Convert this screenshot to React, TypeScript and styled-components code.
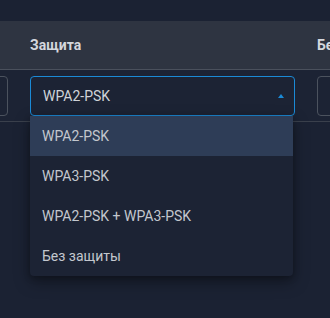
import React from "react";
import styled, { createGlobalStyle } from "styled-components";

const Global = createGlobalStyle`
  html, body { margin: 0; padding: 0; background: #1b2233; }
  body { font-family: Roboto, "Noto Sans", sans-serif; overflow: hidden; }
`;

const Page = styled.div`
  width: 330px;
  height: 318px;
  background: #1b2233;
  padding-top: 21px;
  box-sizing: border-box;
  overflow: hidden;
`;

const Table = styled.div`
  margin-left: -268px;
  display: flex;
  flex-direction: column;
  width: max-content;
`;

const HeaderRow = styled.div`
  display: flex;
  background: #2e3441;
  border-bottom: 1px solid #4a505c;
  height: 48px;
`;

const HeaderCell = styled.div`
  width: 287px;
  box-sizing: border-box;
  padding: 0 11px;
  display: flex;
  align-items: center;
  font-size: 14px;
  font-weight: 700;
  color: #d4d7dd;
  white-space: nowrap;
`;

const BodyRow = styled.div`
  display: flex;
  background: #1c2334;
  border-bottom: 1px solid #3a404c;
  height: 52px;
  box-sizing: border-box;
  padding: 6px 0;
`;

const Cell = styled.div`
  width: 287px;
  box-sizing: border-box;
  padding: 0 11px;
  position: relative;
`;

const SelectBox = styled.div<{ $open?: boolean }>`
  height: 40px;
  box-sizing: border-box;
  border: 1px solid ${(p) => (p.$open ? "#1b8ad6" : "#4b525e")};
  border-radius: 4px;
  display: flex;
  align-items: center;
  justify-content: space-between;
  padding: 0 9px 0 12px;
  font-size: 14px;
  color: #d0d3d9;
  background: #1c2334;
`;

const Arrow = styled.span`
  width: 0;
  height: 0;
  border-left: 3px solid transparent;
  border-right: 3px solid transparent;
  border-bottom: 4px solid #1b8ad6;
  margin-right: 1px;
`;

const Menu = styled.div`
  position: absolute;
  left: 11px;
  top: 40px;
  width: 263px;
  background: #1c2334;
  border-radius: 0 0 4px 4px;
  box-shadow: 0 6px 16px rgba(0, 0, 0, 0.35), 0 2px 6px rgba(0, 0, 0, 0.25);
  z-index: 10;
  overflow: hidden;
`;

const Option = styled.div<{ $active?: boolean }>`
  height: 40px;
  display: flex;
  align-items: center;
  padding: 0 12px;
  font-size: 14px;
  color: #c3c7ce;
  background: ${(p) => (p.$active ? "#2e3d57" : "transparent")};
`;

const options = ["WPA2-PSK", "WPA3-PSK", "WPA2-PSK + WPA3-PSK", "Без защиты"];

export default function App() {
  return (
    <Page>
      <Global />
      <Table>
        <HeaderRow>
          <HeaderCell />
          <HeaderCell>Защита</HeaderCell>
          <HeaderCell>Безопасность</HeaderCell>
        </HeaderRow>
        <BodyRow>
          <Cell>
            <SelectBox />
          </Cell>
          <Cell>
            <SelectBox $open>
              WPA2-PSK
              <Arrow />
            </SelectBox>
            <Menu>
              {options.map((o, i) => (
                <Option key={o} $active={i === 0}>
                  {o}
                </Option>
              ))}
            </Menu>
          </Cell>
          <Cell>
            <SelectBox />
          </Cell>
        </BodyRow>
      </Table>
    </Page>
  );
}
